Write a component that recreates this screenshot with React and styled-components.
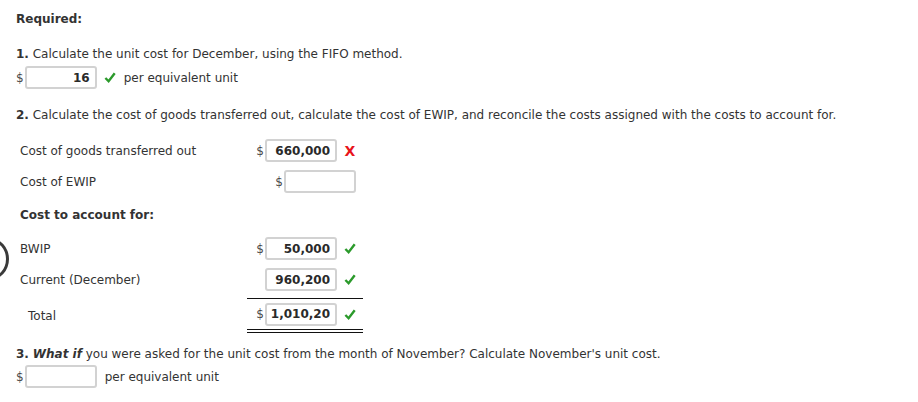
import React from "react";
import styled, { createGlobalStyle } from "styled-components";

const text_color = "#333";
const green = "#2b9a2b";
const red = "#e8141b";

const GlobalStyle = createGlobalStyle`
  html, body {
    margin: 0;
    padding: 0;
    background: #fff;
  }
  body {
    font-family: "DejaVu Sans", Verdana, sans-serif;
    font-size: 12px;
    color: ${text_color};
  }
`;

const PAGE = styled.div`
  position: relative;
  width: 918px;
  height: 402px;
  box-sizing: border-box;
  padding: 11px 16px 0 16px;
  overflow: hidden;
`;

const HEADING = styled.div`
  font-weight: bold;
  line-height: 16px;
  margin-bottom: 19px;
`;

const QUESTION = styled.div`
  line-height: 16px;
  white-space: nowrap;
  margin-top: ${(p) => p.$top || 0}px;
  margin-bottom: ${(p) => p.$gap || 0}px;
  b {
    font-weight: bold;
  }
  i {
    font-style: italic;
    font-weight: bold;
  }
`;

const ANSWER_ROW = styled.div`
  display: flex;
  align-items: center;
  height: 23px;
  margin-bottom: ${(p) => p.$gap || 0}px;
`;

const DOLLAR = styled.span`
  color: #4a4a4a;
  margin-right: 1px;
  line-height: 16px;
`;

const BOX = styled.input`
  box-sizing: border-box;
  width: 72px;
  height: 23px;
  border: 2px solid #d2d2d2;
  border-radius: 3px;
  background: #fff;
  padding: 0 5px 0 2px;
  text-align: right;
  font-family: "DejaVu Sans", Verdana, sans-serif;
  font-size: 12px;
  font-weight: bold;
  color: #2a2a2a;
  outline: none;
`;

const UNIT = styled.span`
  margin-left: ${(p) => p.$gap}px;
  line-height: 16px;
`;

const MARK = styled.span`
  display: inline-flex;
  align-items: center;
  justify-content: center;
  width: 12px;
  margin-left: 7px;
  color: ${red};
  font-weight: bold;
  font-size: 14px;
  line-height: 16px;
`;

const TABLE = styled.div`
  display: grid;
  grid-template-columns: 227px 116px;
  margin-left: 4px;
`;

const LABEL = styled.div`
  display: flex;
  align-items: center;
  padding-left: ${(p) => p.$indent || 0}px;
  font-weight: ${(p) => (p.$bold ? "bold" : "normal")};
  height: ${(p) => p.$height}px;
  margin-top: ${(p) => p.$top || 0}px;
`;

const VALUE = styled.div`
  display: flex;
  align-items: center;
  justify-content: flex-end;
  padding-right: 7px;
  height: ${(p) => p.$height}px;
  margin-top: ${(p) => p.$top || 0}px;
  border-top: ${(p) => (p.$topLine ? "1px solid #111" : "none")};
  border-bottom: ${(p) => (p.$doubleLine ? "4px double #111" : "none")};
  box-sizing: border-box;
`;

const CIRCLE = styled.div`
  position: absolute;
  left: -29px;
  top: 238px;
  width: 32px;
  height: 36px;
  border: 3px solid #3a3a3a;
  border-radius: 50%;
`;

const Check = () => (
  <MARK>
    <svg width="13" height="13" viewBox="0 0 13 13">
      <path d="M1.5 7 L5 10.6 L11.6 2" fill="none" stroke={green} strokeWidth="2.6" />
    </svg>
  </MARK>
);

const Cross = () => <MARK>X</MARK>;

const Answer = ({ dollar, value, mark }) => (
  <>
    {dollar && <DOLLAR>$</DOLLAR>}
    <BOX readOnly value={value || ""} />
    {mark === "check" && <Check />}
    {mark === "cross" && <Cross />}
  </>
);

export default function App() {
  return (
    <PAGE>
      <GlobalStyle />
      <CIRCLE />
      <HEADING>Required:</HEADING>

      <QUESTION $gap={4}>
        <b>1.</b> Calculate the unit cost for December, using the FIFO method.
      </QUESTION>
      <ANSWER_ROW $gap={18}>
        <Answer dollar value="16" mark="check" />
        <UNIT $gap={8}>per equivalent unit</UNIT>
      </ANSWER_ROW>

      <QUESTION $gap={12}>
        <b>2.</b> Calculate the cost of goods transferred out, calculate the cost of EWIP, and reconcile the
        costs assigned with the costs to account for.
      </QUESTION>

      <TABLE>
        <LABEL $height={31}>Cost of goods transferred out</LABEL>
        <VALUE $height={31}>
          <Answer dollar value="660,000" mark="cross" />
        </VALUE>

        <LABEL $height={31}>Cost of EWIP</LABEL>
        <VALUE $height={31}>
          <Answer dollar />
        </VALUE>

        <LABEL $height={36} $bold>Cost to account for:</LABEL>
        <VALUE $height={36} />

        <LABEL $height={31}>BWIP</LABEL>
        <VALUE $height={31}>
          <Answer dollar value="50,000" mark="check" />
        </VALUE>

        <LABEL $height={31}>Current (December)</LABEL>
        <VALUE $height={31}>
          <Answer value="960,200" mark="check" />
        </VALUE>

        <LABEL $height={35} $top={3} $indent={8}>Total</LABEL>
        <VALUE $height={35} $top={3} $topLine $doubleLine>
          <Answer dollar value="1,010,20" mark="check" />
        </VALUE>
      </TABLE>

      <QUESTION $gap={3} $top={13}>
        <b>3.</b> <i>What if</i> you were asked for the unit cost from the month of November? Calculate
        November's unit cost.
      </QUESTION>
      <ANSWER_ROW>
        <Answer dollar />
        <UNIT $gap={8}>per equivalent unit</UNIT>
      </ANSWER_ROW>
    </PAGE>
  );
}
